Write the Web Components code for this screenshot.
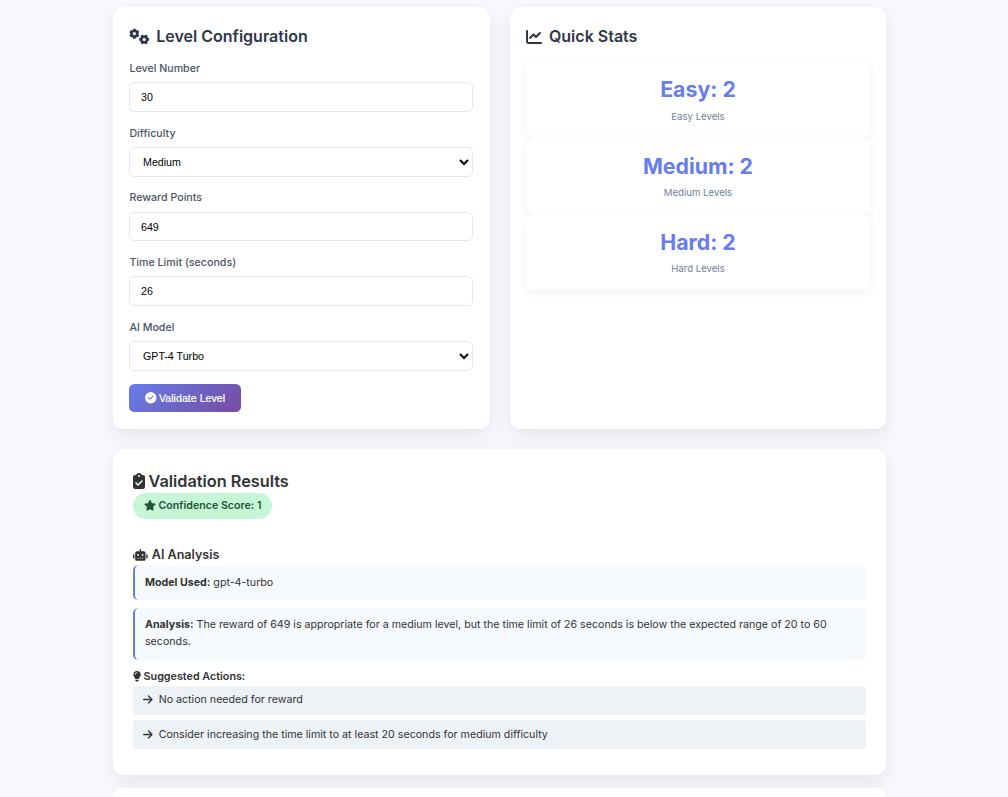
<!DOCTYPE html>
<html lang="en">
<head>
<meta charset="utf-8">
<title>Level Validator</title>
<style>
html, body { margin: 0; height: 100%; overflow: hidden; }
body { background: #f8f9fe; font-family: Inter, "Liberation Sans", sans-serif; font-size: 10.67px; line-height: 1.6; color: #333; }
</style>
</head>
<body>
<level-app></level-app>
<script>
const gear = (x, y, turn) => {
  let teeth = '';
  for (let i = 0; i < 6; i++) teeth += `<rect x="-44" y="-160" width="88" height="85" rx="16" transform="translate(${x} ${y}) rotate(${turn + i * 60})"/>`;
  return `<circle cx="${x}" cy="${y}" r="90" fill="none" stroke="currentColor" stroke-width="78"/>${teeth}`;
};
const ICONS = {
  gears: [640, gear(172, 150, 0) + gear(484, 335, 30)],
  chart: [512, '<path d="M64 64c0-17.7-14.3-32-32-32S0 46.3 0 64V400c0 44.2 35.8 80 80 80H480c17.7 0 32-14.3 32-32s-14.3-32-32-32H80c-8.8 0-16-7.2-16-16V64zm406.6 86.6c12.5-12.5 12.5-32.8 0-45.3s-32.8-12.5-45.3 0L320 210.7l-57.4-57.4c-12.5-12.5-32.8-12.5-45.3 0l-112 112c-12.5 12.5-12.5 32.8 0 45.3s32.8 12.5 45.3 0L240 221.3l57.4 57.4c12.5 12.5 32.8 12.5 45.3 0l128-128z"/>'],
  check: [512, '<path d="M256 512A256 256 0 1 0 256 0a256 256 0 1 0 0 512zM369 209L241 337c-9.4 9.4-24.6 9.4-33.9 0l-64-64c-9.4-9.4-9.4-24.6 0-33.9s24.6-9.4 33.9 0l47 47L335 175c9.4-9.4 24.6-9.4 33.9 0s9.4 24.6 0 33.9z"/>'],
  star: [576, '<path d="M316.9 18C311.6 7 300.4 0 288.1 0s-23.4 7-28.8 18L195 150.3 51.4 171.5c-12 1.8-22 10.2-25.7 21.7s-.7 24.2 7.9 32.7L137.8 329 113.2 474.7c-2 12 3 24.2 12.9 31.3s23 8 33.8 2.3l128.3-68.5 128.3 68.5c10.8 5.7 23.9 4.9 33.8-2.3s14.9-19.3 12.9-31.3L438.5 329 542.7 225.9c8.6-8.5 11.7-21.2 7.9-32.7s-13.7-19.9-25.7-21.7L381.2 150.3 316.9 18z"/>'],
  arrow: [448, '<path d="M438.6 278.6c12.5-12.5 12.5-32.8 0-45.3l-160-160c-12.5-12.5-32.8-12.5-45.3 0s-12.5 32.8 0 45.3L338.8 224 32 224c-17.7 0-32 14.3-32 32s14.3 32 32 32l306.7 0L233.4 393.4c-12.5 12.5-12.5 32.8 0 45.3s32.8 12.5 45.3 0l160-160z"/>'],
  robot: [640, '<path d="M320 0c17.7 0 32 14.3 32 32V96H472c39.8 0 72 32.2 72 72V440c0 39.8-32.2 72-72 72H168c-39.8 0-72-32.2-72-72V168c0-39.8 32.2-72 72-72H288V32c0-17.7 14.3-32 32-32zM208 384c-8.8 0-16 7.2-16 16s7.2 16 16 16h32c8.8 0 16-7.2 16-16s-7.2-16-16-16H208zm96 0c-8.8 0-16 7.2-16 16s7.2 16 16 16h32c8.8 0 16-7.2 16-16s-7.2-16-16-16H304zm96 0c-8.8 0-16 7.2-16 16s7.2 16 16 16h32c8.8 0 16-7.2 16-16s-7.2-16-16-16H400zM264 256a40 40 0 1 0-80 0 40 40 0 1 0 80 0zm152 40a40 40 0 1 0 0-80 40 40 0 1 0 0 80zM48 224H64V416H48c-26.5 0-48-21.5-48-48V272c0-26.5 21.5-48 48-48zm544 0c26.5 0 48 21.5 48 48v96c0 26.5-21.5 48-48 48H576V224h16z"/>'],
  bulb: [384, '<path d="M272 384c9.6-31.9 29.5-59.1 49.2-86.2c5.2-7.1 10.4-14.2 15.4-21.4c19.8-28.5 31.4-63 31.4-100.3C368 78.8 289.2 0 192 0S16 78.8 16 176c0 37.3 11.6 71.9 31.4 100.3c5 7.2 10.2 14.3 15.4 21.4c19.8 27.1 39.7 54.4 49.2 86.2H272zM192 512c44.2 0 80-35.8 80-80V416H112v16c0 44.2 35.8 80 80 80zM112 176c0 8.8-7.2 16-16 16s-16-7.2-16-16c0-61.9 50.1-112 112-112c8.8 0 16 7.2 16 16s-7.2 16-16 16c-44.2 0-80 35.8-80 80z"/>'],
  clipboard: [384, '<path d="M192 0c-41.8 0-77.4 26.7-90.5 64H64C28.7 64 0 92.7 0 128V448c0 35.3 28.7 64 64 64H320c35.3 0 64-28.7 64-64V128c0-35.3-28.7-64-64-64H282.5C269.4 26.7 233.8 0 192 0zm0 64a32 32 0 1 1 0 64 32 32 0 1 1 0-64zM305 273L177 401c-9.4 9.4-24.6 9.4-33.9 0L79 337c-9.4-9.4-9.4-24.6 0-33.9s24.6-9.4 33.9 0l47 47L271 239c9.4-9.4 24.6-9.4 33.9 0s9.4 24.6 0 33.9z"/>']
};
const define = (name, render) => customElements.define(name, class extends HTMLElement {
  connectedCallback() {
    if (!this.shadowRoot) this.attachShadow({ mode: 'open' }).innerHTML = render(this);
  }
});
const attr = (el, n) => el.getAttribute(n) || '';

define('fa-icon', el => {
  const [w, body] = ICONS[attr(el, 'name')];
  return `<style>:host{display:inline-block;flex:none;line-height:0;vertical-align:-.125em}svg{display:block;height:1em;width:${w / 512}em;overflow:visible}</style>
  <svg viewBox="0 0 ${w} 512" fill="currentColor" aria-hidden="true">${body}</svg>`;
});
define('panel-card', () => `<style>
  :host{display:block;box-sizing:border-box;background:#fff;border-radius:10.67px;padding:16px;box-shadow:0 6.67px 20px rgba(0,0,0,.08)}
  </style><slot></slot>`);
define('card-title', el => `<style>
  :host{display:flex;align-items:center;gap:7.3px;height:26px;font-size:16px;font-weight:600;color:#2d3748;white-space:nowrap}
  </style><fa-icon name="${attr(el, 'icon')}"></fa-icon><span><slot></slot></span>`);
define('form-field', el => {
  const v = attr(el, 'value');
  const box = el.hasAttribute('select')
    ? `<select><option>${v}</option></select>` : `<input type="text" value="${v}">`;
  return `<style>
  :host{display:block;height:64.67px}
  label{display:block;font-weight:500;color:#4a5568;height:17.07px;line-height:17.07px;margin-bottom:5.33px;padding-left:.4px}
  input,select{display:block;box-sizing:border-box;width:344px;height:29.6px;border:1px solid #e2e8f0;border-radius:5.33px;background:#fff;color:#000;font:10.67px "Liberation Sans",Arial,sans-serif;padding:0 11px;margin:0}
  select{padding:0 0 0 9px}
  </style><label>${attr(el, 'label')}</label>${box}`;
});
define('action-button', el => `<style>
  :host{display:block}
  button{display:flex;align-items:center;gap:2.5px;box-sizing:border-box;width:112px;height:28px;padding:0 0 0 16px;border:0;border-radius:5.33px;background:linear-gradient(135deg,#667eea,#764ba2);color:#fff;font:500 10.67px "Liberation Sans",Arial,sans-serif;white-space:nowrap}
  fa-icon{font-size:11.5px}
  span{-webkit-text-stroke:.2px currentColor}
  </style><button><fa-icon name="check"></fa-icon><span><slot></slot></span></button>`);
define('stat-card', el => `<style>
  :host{display:flex;flex-direction:column;align-items:center;box-sizing:border-box;height:76.3px;padding-top:11.4px;background:#fff;border-radius:8px;box-shadow:0 2.67px 10px rgba(0,0,0,.055)}
  b{font-size:21.33px;line-height:34px;font-weight:700;color:#667eea}
  span{font-size:9.6px;line-height:15.4px;color:#718096;margin-top:2.2px}
  </style><b>${attr(el, 'value')}</b><span>${attr(el, 'label')}</span>`);
define('score-pill', () => `<style>
  :host{display:flex;align-items:center;gap:2.6px;box-sizing:border-box;width:139px;height:26px;padding:0 0 1px 10.8px;border-radius:13.3px;background:#c6f6d5;color:#22543d;font-weight:600;white-space:nowrap}
  fa-icon{margin-top:-1px}
  </style><fa-icon name="star"></fa-icon><span><slot></slot></span>`);
define('analysis-box', el => `<style>
  :host{display:block;box-sizing:border-box;padding:9.6px 10px 0;border-left:2px solid #667eea;border-radius:5.33px;background:#f7fafc;line-height:16.4px}
  b{font-weight:700}
  </style><b>${attr(el, 'label')}</b> <slot></slot>`);
define('action-item', () => `<style>
  :host{display:flex;align-items:center;gap:6px;box-sizing:border-box;height:29px;padding:0 0 1.2px 10px;border-radius:4px;background:#edf2f7}
  fa-icon{font-size:11px}
  </style><fa-icon name="arrow"></fa-icon><span><slot></slot></span>`);
define('validation-results', () => `<style>
  :host{display:flex;flex-direction:column;box-sizing:border-box;height:294px}
  h2,h3,h4{margin:0;display:flex;align-items:center;font-weight:600;white-space:nowrap}
  h2{font-size:16.3px;gap:3.5px;height:23px;padding-top:2px}
  h2 fa-icon{font-size:16px;margin-top:-1px}
  h3{font-size:12.55px;gap:4px;height:20px;margin:26px 0 0}
  h3 fa-icon{font-size:11.8px;margin-top:-1px}
  h4{font-size:10.75px;gap:2.5px;height:17px;margin-top:9px}
  h4 fa-icon{margin-top:-1.5px}
  .one{height:35.4px}.two{height:52px;margin-top:7.2px}
  action-item+action-item{margin-top:5.6px}
  </style>
  <h2><fa-icon name="clipboard"></fa-icon><span>Validation Results</span></h2>
  <score-pill>Confidence Score: 1</score-pill>
  <h3><fa-icon name="robot"></fa-icon><span>AI Analysis</span></h3>
  <analysis-box class="one" label="Model Used:">gpt-4-turbo</analysis-box>
  <analysis-box class="two" label="Analysis:">The reward of 649 is appropriate for a medium level, but the time limit of 26 seconds is below the expected range of 20 to 60 seconds.</analysis-box>
  <h4><fa-icon name="bulb"></fa-icon><span>Suggested Actions:</span></h4>
  <action-item>No action needed for reward</action-item>
  <action-item>Consider increasing the time limit to at least 20 seconds for medium difficulty</action-item>`);
define('level-app', () => `<style>
  :host{display:block;box-sizing:border-box;width:773.33px;margin-left:113px;padding-top:7px}
  .grid{display:grid;grid-template-columns:1fr 1fr;gap:20px;height:422px}
  .grid panel-card{padding-top:16.6px}
  .form{padding-top:10.5px}
  action-button{padding-top:.5px}
  .results{height:326px;margin-top:20px;padding:19px 20px 13px}
  .next{height:9px;margin-top:13px;padding:0;border-radius:10.67px 10.67px 0 0}
  .stats{padding-top:11.4px}
  </style>
  <div class="grid">
    <panel-card><card-title icon="gears">Level Configuration</card-title>
      <div class="form">
        <form-field label="Level Number" value="30"></form-field>
        <form-field select label="Difficulty" value="Medium"></form-field>
        <form-field label="Reward Points" value="649"></form-field>
        <form-field label="Time Limit (seconds)" value="26"></form-field>
        <form-field select label="AI Model" value="GPT-4 Turbo"></form-field>
        <action-button>Validate Level</action-button>
      </div>
    </panel-card>
    <panel-card><card-title icon="chart">Quick Stats</card-title>
      <div class="stats">
        <stat-card value="Easy: 2" label="Easy Levels"></stat-card>
        <stat-card value="Medium: 2" label="Medium Levels"></stat-card>
        <stat-card value="Hard: 2" label="Hard Levels"></stat-card>
      </div>
    </panel-card>
  </div>
  <panel-card class="results"><validation-results></validation-results></panel-card>
  <panel-card class="next"></panel-card>`);
</script>
</body>
</html>
